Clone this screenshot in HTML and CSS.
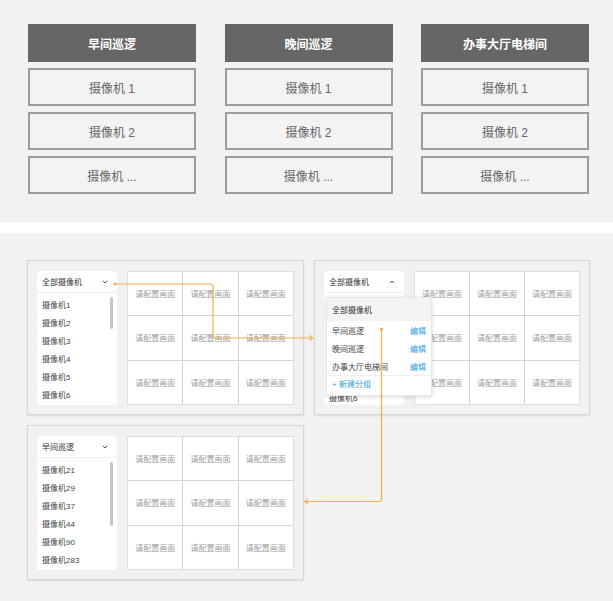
FILE: index.html
```html
<!DOCTYPE html>
<html lang="zh-CN">
<head>
    <meta charset="UTF-8">
    <title>摄像机分组</title>
    <link rel="stylesheet" href="styles.css">
</head>
<body>

<section class="groups">
    <div class="group">
        <div class="group_title">早间巡逻</div>
        <div class="group_item">摄像机 1</div>
        <div class="group_item">摄像机 2</div>
        <div class="group_item">摄像机 ...</div>
    </div>
    <div class="group">
        <div class="group_title">晚间巡逻</div>
        <div class="group_item">摄像机 1</div>
        <div class="group_item">摄像机 2</div>
        <div class="group_item">摄像机 ...</div>
    </div>
    <div class="group">
        <div class="group_title">办事大厅电梯间</div>
        <div class="group_item">摄像机 1</div>
        <div class="group_item">摄像机 2</div>
        <div class="group_item">摄像机 ...</div>
    </div>
</section>

<div class="divider"></div>

<section class="demos">
    <!-- all cameras -->
    <div class="panel">
        <div class="sidebar">
            <div class="select">
                <span>全部摄像机</span>
                <svg class="chevron" width="6" height="4" viewBox="0 0 6 4"><path d="M0.8 0.8 L3 3 L5.2 0.8"/></svg>
            </div>
            <ul class="cam_list">
                <li>摄像机1</li>
                <li>摄像机2</li>
                <li>摄像机3</li>
                <li>摄像机4</li>
                <li>摄像机5</li>
                <li>摄像机6</li>
            </ul>
            <div class="scroll_thumb"></div>
        </div>
        <div class="screens">
            <div class="screen">请配置画面</div><div class="screen">请配置画面</div><div class="screen">请配置画面</div>
            <div class="screen">请配置画面</div><div class="screen">请配置画面</div><div class="screen">请配置画面</div>
            <div class="screen">请配置画面</div><div class="screen">请配置画面</div><div class="screen">请配置画面</div>
        </div>
    </div>

    <!-- group menu open, list underneath is covered -->
    <div class="panel">
        <div class="sidebar">
            <div class="select">
                <span>全部摄像机</span>
                <svg class="chevron" width="6" height="4" viewBox="0 0 6 4"><path d="M0.8 3.2 L3 1 L5.2 3.2"/></svg>
            </div>
            <ul class="cam_list cam_list_under">
                <li class="covered">摄像机1</li>
                <li class="covered">摄像机2</li>
                <li class="covered">摄像机3</li>
                <li class="covered">摄像机4</li>
                <li class="covered">摄像机5</li>
                <li>摄像机6</li>
            </ul>
            <div class="menu">
                <div class="menu_item menu_item_active">全部摄像机</div>
                <div class="menu_item">早间巡逻<span class="menu_edit">编辑</span></div>
                <div class="menu_item">晚间巡逻<span class="menu_edit">编辑</span></div>
                <div class="menu_item">办事大厅电梯间<span class="menu_edit">编辑</span></div>
                <div class="menu_add">+ 新建分组</div>
            </div>
        </div>
        <div class="screens">
            <div class="screen">请配置画面</div><div class="screen">请配置画面</div><div class="screen">请配置画面</div>
            <div class="screen">请配置画面</div><div class="screen">请配置画面</div><div class="screen">请配置画面</div>
            <div class="screen">请配置画面</div><div class="screen">请配置画面</div><div class="screen">请配置画面</div>
        </div>
    </div>

    <!-- morning patrol selected -->
    <div class="panel">
        <div class="sidebar">
            <div class="select">
                <span>早间巡逻</span>
                <svg class="chevron" width="6" height="4" viewBox="0 0 6 4"><path d="M0.8 0.8 L3 3 L5.2 0.8"/></svg>
            </div>
            <ul class="cam_list">
                <li>摄像机21</li>
                <li>摄像机29</li>
                <li>摄像机37</li>
                <li>摄像机44</li>
                <li>摄像机90</li>
                <li>摄像机283</li>
            </ul>
            <div class="scroll_thumb scroll_thumb_long"></div>
        </div>
        <div class="screens">
            <div class="screen">请配置画面</div><div class="screen">请配置画面</div><div class="screen">请配置画面</div>
            <div class="screen">请配置画面</div><div class="screen">请配置画面</div><div class="screen">请配置画面</div>
            <div class="screen">请配置画面</div><div class="screen">请配置画面</div><div class="screen">请配置画面</div>
        </div>
    </div>

    <!-- flow arrows between the panels -->
    <svg class="flow" width="613" height="368" viewBox="0 0 613 368">
        <circle cx="115" cy="51" r="1.6"/>
        <path d="M115 51 H211 Q213 51 213 53 V103 Q213 105 215 105 H312.5"/>
        <path d="M309.5 102.5 L312.5 105 L309.5 107.5"/>
        <circle cx="381.5" cy="96" r="1.6"/>
        <path d="M381.5 96 V266 Q381.5 268.5 379 268.5 H305"/>
        <path d="M308 266 L305 268.5 L308 271"/>
    </svg>
</section>

</body>
</html>
```

FILE: styles.css
```css
* {
  box-sizing: border-box;
}

body {
  margin: 0;
  background: #f2f2f2;
  font-family: "Liberation Sans", "Noto Sans CJK SC", sans-serif;
}

/* top: group cards */
.groups {
  display: flex;
  gap: 28.5px;
  height: 222px;
  padding: 24px 0 0 28px;
}

.group {
  display: flex;
  flex-direction: column;
  gap: 6px;
  width: 168px;
}

.group_title,
.group_item {
  height: 38px;
  display: flex;
  align-items: center;
  justify-content: center;
  font-size: 12px;
}

.group_title {
  background: #666;
  color: #fff;
  font-weight: bold;
}

.group_item {
  border: 2px solid #9c9c9c;
  background: #f3f3f3;
  color: #666;
}

.divider {
  height: 11px;
  background: #fff;
}

/* bottom: monitor panels */
.demos {
  position: relative;
  display: grid;
  grid-template-columns: 277px 276px;
  row-gap: 10px;
  column-gap: 10px;
  padding: 27px 0 0 27px;
  height: 368px;
  align-content: start;
}

.panel {
  display: flex;
  gap: 10px;
  height: 155px;
  padding: 10px 9px 9px 9px;
  background: #f1f1f1;
  border: 1px solid #d6d6d6;
  box-shadow: 0 1px 2px rgba(0, 0, 0, 0.1);
}

.sidebar {
  position: relative;
  width: 80px;
  flex: none;
  background: #fff;
  border-radius: 3px;
}

.select {
  height: 22px;
  display: flex;
  align-items: center;
  justify-content: space-between;
  padding: 0 9px 0 5px;
  border-bottom: 1px solid #eee;
  font-size: 8px;
  color: #333;
}

.chevron {
  fill: none;
  stroke: #555;
  stroke-width: 1;
}

.cam_list {
  list-style: none;
  margin: 0;
  padding: 4px 0 0 5px;
  height: 111px;
  overflow: hidden;
}

.cam_list li {
  height: 18px;
  line-height: 18px;
  font-size: 8px;
  color: #444;
}

.cam_list_under {
  padding-top: 7px;
}

.cam_list li.covered {
  visibility: hidden;
}

.scroll_thumb {
  position: absolute;
  right: 4px;
  top: 26px;
  width: 3px;
  height: 32px;
  border-radius: 2px;
  background: #c6c6c6;
}

.scroll_thumb_long {
  height: 64px;
}

/* group dropdown */
.menu {
  position: absolute;
  left: 2px;
  top: 26px;
  z-index: 2;
  width: 106px;
  padding-bottom: 2px;
  background: #fff;
  border: 1px solid #e6e6e6;
  box-shadow: 0 1px 4px rgba(0, 0, 0, 0.15);
  font-size: 8px;
  color: #444;
}

.menu_item {
  height: 18px;
  display: flex;
  align-items: center;
  justify-content: space-between;
  padding: 0 5px 0 5px;
}

.menu_item_active {
  height: 23px;
  background: #f3f3f3;
  color: #333;
}

.menu_edit {
  color: #2d9be0;
}

.menu_add {
  height: 18px;
  line-height: 18px;
  padding-left: 5px;
  border-top: 1px solid #eee;
  color: #2d9be0;
}

.screens {
  flex: 1;
  display: grid;
  grid-template-columns: repeat(3, 1fr);
  grid-template-rows: repeat(3, 1fr);
  gap: 1px;
  background: #d3d3d3;
  border: 1px solid #dedede;
}

.screen {
  display: flex;
  align-items: center;
  justify-content: center;
  background: #fff;
  font-size: 8px;
  color: #9e9e9e;
}

.flow {
  position: absolute;
  left: 0;
  top: 0;
  z-index: 5;
  pointer-events: none;
  fill: none;
  stroke: #ebb34b;
  stroke-width: 1.2;
}

.flow circle {
  fill: #ebb34b;
  stroke: none;
}
```
